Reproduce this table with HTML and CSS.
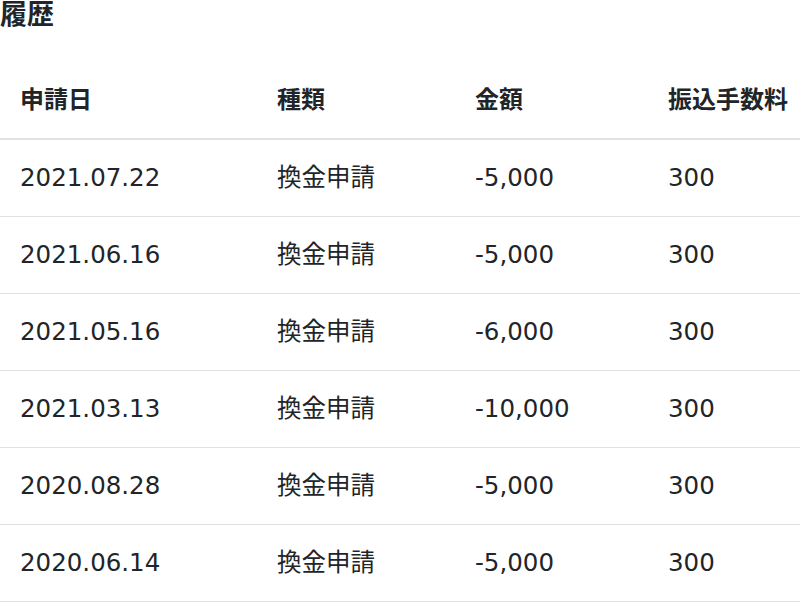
FILE: index.html
```html
<!DOCTYPE html>
<html lang="ja">
<head>
<meta charset="utf-8">
<title>履歴</title>
<link rel="stylesheet" href="styles.css">
</head>
<body>
<h2 class="title">履歴</h2>
<table class="history">
  <colgroup>
    <col class="c1"><col class="c2"><col class="c3"><col class="c4">
  </colgroup>
  <thead>
    <tr><th>申請日</th><th>種類</th><th>金額</th><th>振込手数料</th></tr>
  </thead>
  <tbody>
    <tr><td>2021.07.22</td><td>換金申請</td><td>-5,000</td><td>300</td></tr>
    <tr><td>2021.06.16</td><td>換金申請</td><td>-5,000</td><td>300</td></tr>
    <tr><td>2021.05.16</td><td>換金申請</td><td>-6,000</td><td>300</td></tr>
    <tr><td>2021.03.13</td><td>換金申請</td><td>-10,000</td><td>300</td></tr>
    <tr><td>2020.08.28</td><td>換金申請</td><td>-5,000</td><td>300</td></tr>
    <tr><td>2020.06.14</td><td>換金申請</td><td>-5,000</td><td>300</td></tr>
  </tbody>
</table>
</body>
</html>
```
FILE: styles.css
```css
html, body {
  margin: 0;
  padding: 0;
  background: #fff;
  overflow: hidden;
}
body {
  font-family: "DejaVu Sans", "Noto Sans CJK JP", sans-serif;
  color: #212529;
  font-size: 24px;
}
.title {
  margin: 0;
  font-size: 27px;
  line-height: 30px;
  font-weight: bold;
}
.history {
  margin-top: 32px;
  width: 100%;
  border-collapse: collapse;
  table-layout: fixed;
}
.c1 { width: 257px; }
.c2 { width: 198px; }
.c3 { width: 193px; }
.history th,
.history td {
  text-align: left;
  padding: 20px 0 20px 20px;
  line-height: 36px;
  white-space: nowrap;
  vertical-align: middle;
}
.history th {
  font-weight: bold;
  border-bottom: 2px solid #dee2e6;
}
.history td {
  border-bottom: 1px solid #dee2e6;
  font-size: 24.5px;
}
```
